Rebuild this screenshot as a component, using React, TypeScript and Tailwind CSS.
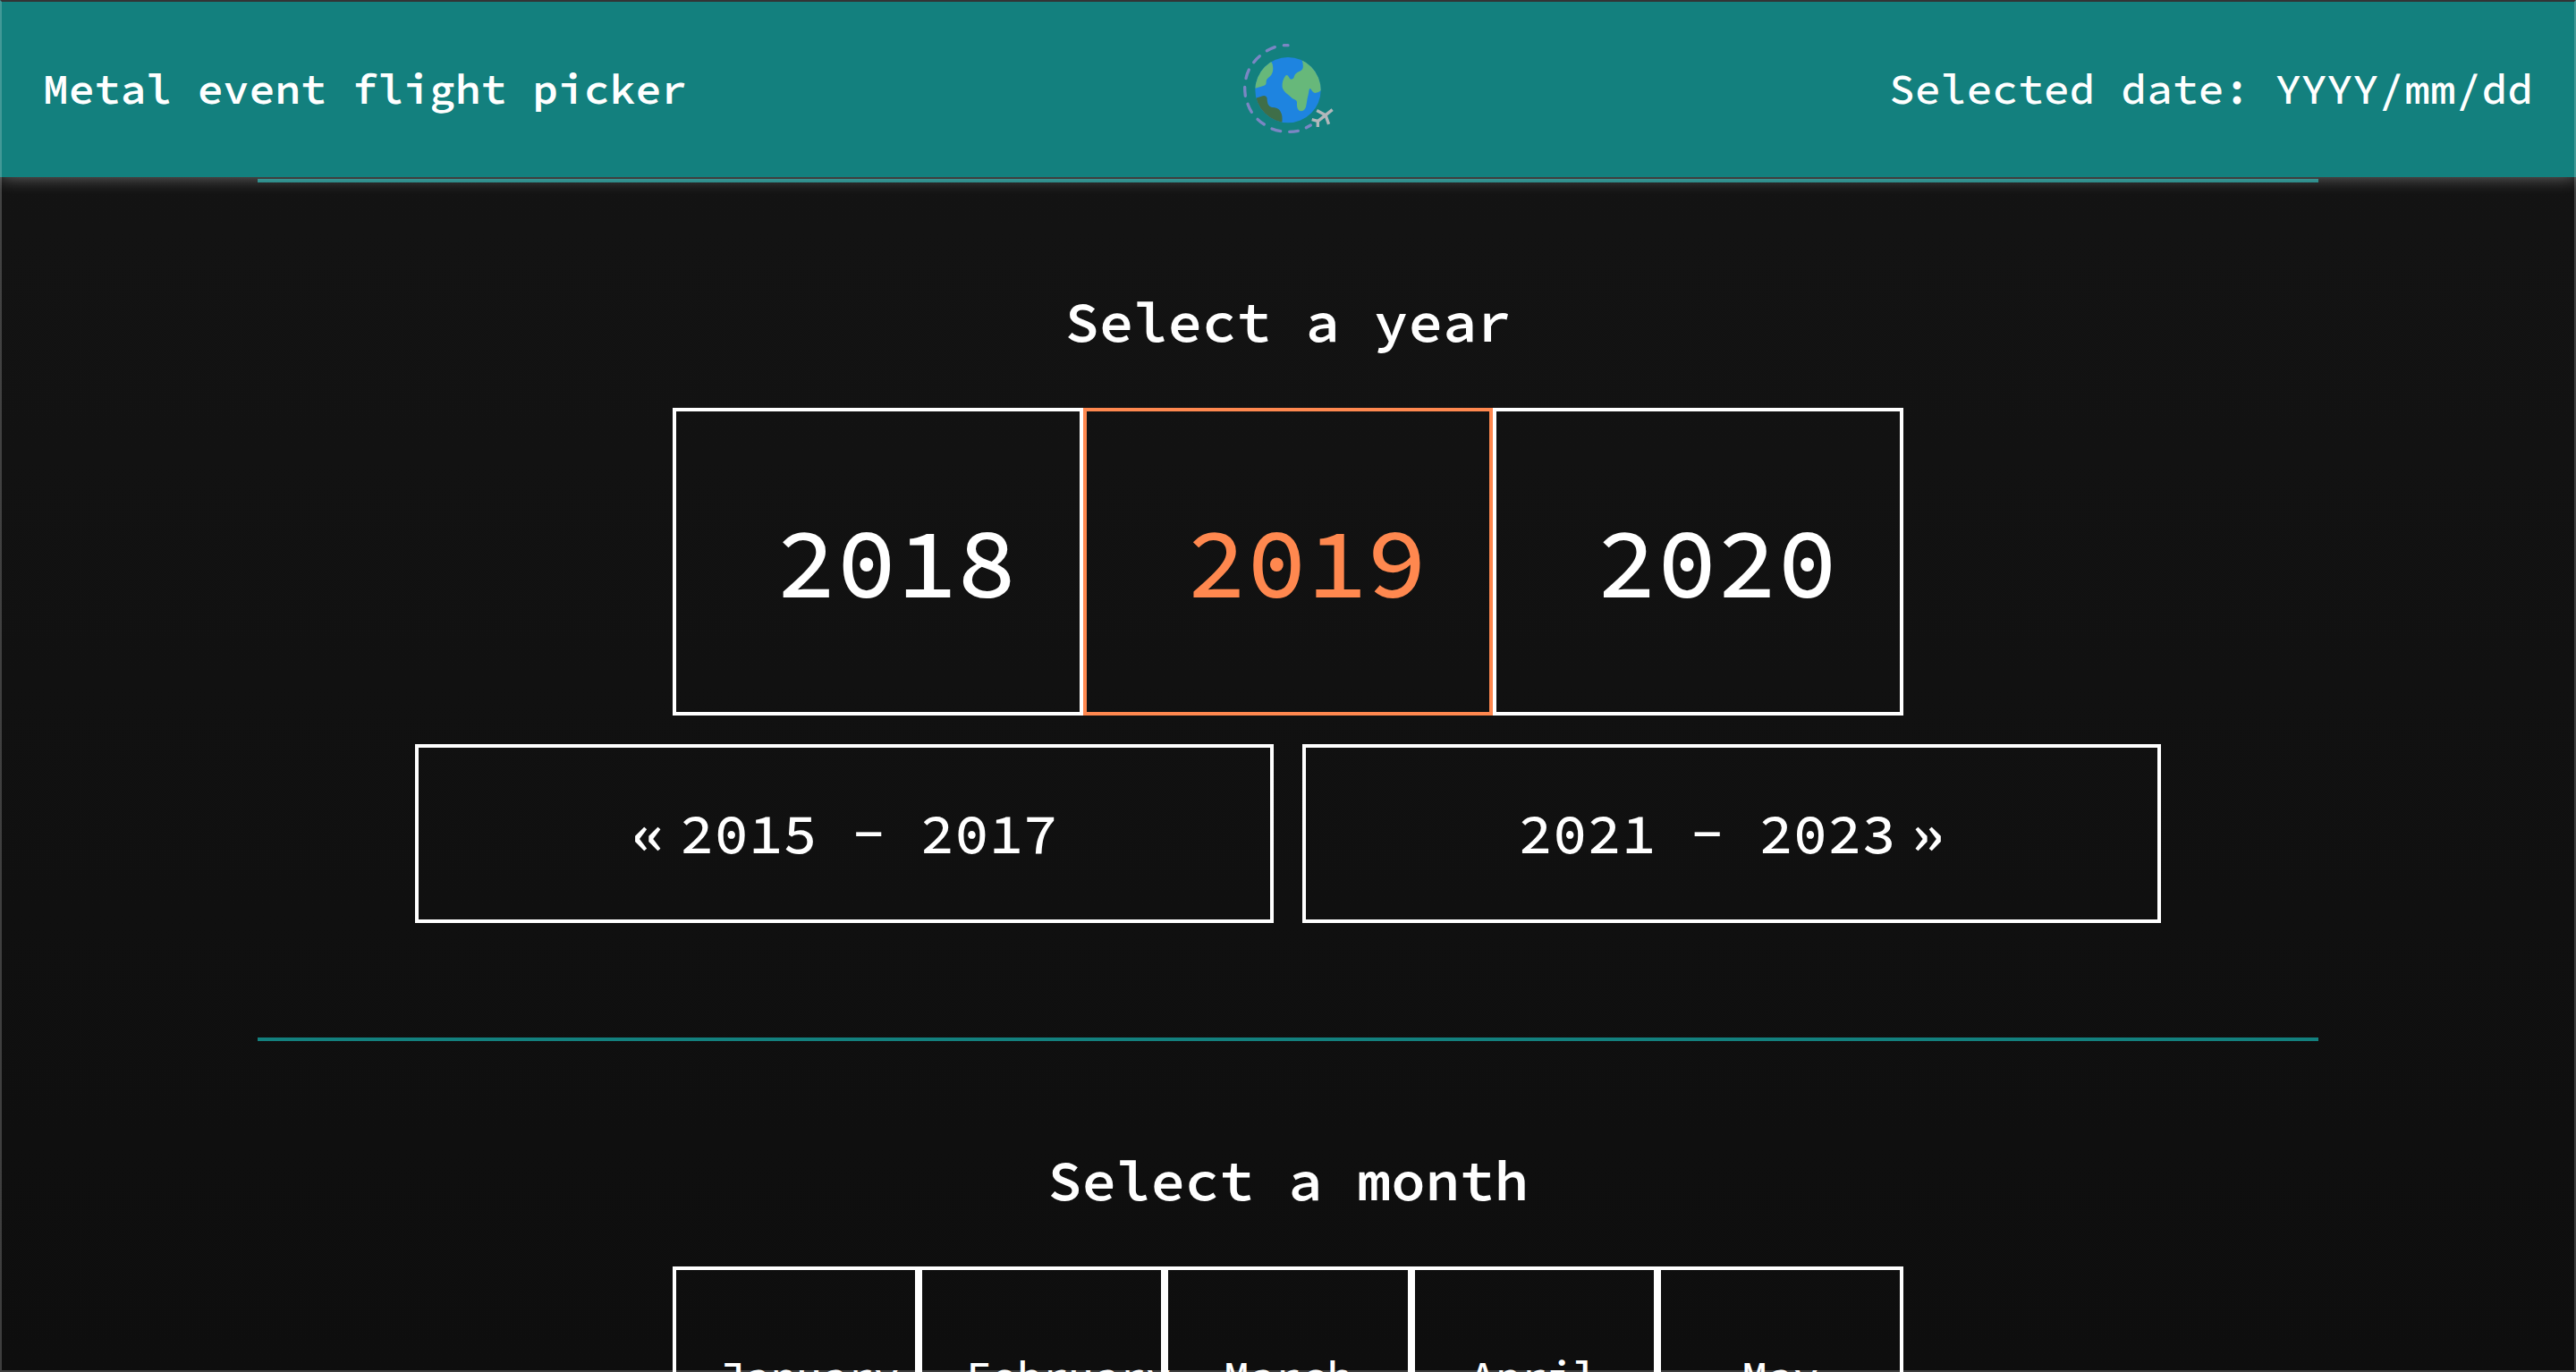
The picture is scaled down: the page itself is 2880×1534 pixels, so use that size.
import { useState } from 'react';

const years = ['2018', '2019', '2020'];
const months = ['January', 'February', 'March', 'April', 'May'];

function GlobeLogo() {
  return (
    <svg viewBox="0 0 420 420" className="size-[140px]" role="img" aria-label="Globe with a plane">
      <defs>
        <clipPath id="globe">
          <circle cx="210" cy="215" r="110" />
        </clipPath>
      </defs>
      <circle cx="210" cy="215" r="110" fill="#1e84e0" />
      <g clipPath="url(#globe)">
        <path
          d="M90 212 L100 209 L130 200 Q138 197 137 189 Q136 180 143 175 Q160 164 160 142 Q160 128 155 122 L140 100 L80 120 Z"
          fill="#67b87a"
        />
        <path
          d="M256 112 Q262 128 260 140 Q258 149 247 153 Q234 158 231 169 Q229 179 221 179 Q215 178 211 169 Q206 162 201 168 Q189 184 191 206 Q195 220 212 232 Q224 245 236 249 Q241 251 240 260 Q239 285 254 286 Q269 286 272 262 Q274 246 279 226 Q281 207 286 211 Q292 223 301 225 Q313 225 322 215 L340 150 L280 90 Z"
          fill="#67b87a"
        />
        <path
          d="M100 243 L125 235 Q137 232 140 242 Q139 262 149 270 Q155 274 165 274 Q182 276 188 294 Q192 305 190 323 L140 340 L80 280 Z"
          fill="#3f6e48"
        />
      </g>
      <g fill="none" stroke="#7b86c4" strokeWidth="10" strokeLinecap="round">
        <path d="M210 65 L196 65" />
        <path d="M166 71 Q152 76 139 83" />
        <path d="M115 101 Q103 111 95 122" />
        <path d="M79 147 Q72 161 69 176" />
        <path d="M65 205 Q65 220 67 235" />
        <path d="M75 262 Q80 277 88 289" />
        <path d="M108 313 Q118 323 130 330" />
        <path d="M156 345 Q170 351 185 353" />
        <path d="M215 355 Q230 355 244 352" />
        <path d="M271 341 L286 333" />
      </g>
      <g fill="none" stroke="#b2b7bb" strokeWidth="10" strokeLinecap="square" strokeLinejoin="round">
        <path d="M355 284 L311 319" />
        <path d="M311 286 L336 299 L345 325" />
        <path d="M295 315 L310 319 L310 334" />
      </g>
    </svg>
  );
}

function Divider() {
  return <hr className="mx-auto h-1 w-4/5 border-0 bg-[#13807e]" />;
}

export default function App() {
  const [year, setYear] = useState('2019');
  const [month, setMonth] = useState('');

  return (
    <div className="h-screen overflow-hidden bg-linear-to-b from-[#141414] to-[#0e0e0e] font-['Source_Code_Pro','Noto_Sans_Mono_CJK_JP','Liberation_Mono',monospace] font-medium text-white">
      <header className="relative z-10 grid h-[198px] grid-cols-[1fr_auto_1fr] items-center bg-[#13807e] px-12 text-5xl leading-none shadow-[0_0_18px_rgba(255,255,255,0.4)]">
        <h1 className="font-semibold">Metal event flight picker</h1>
        <GlobeLogo />
        <p className="text-right">Selected date: YYYY/mm/dd</p>
      </header>

      <main className="pt-0.5">
        <section className="pb-32">
          <Divider />
          <h2 className="mt-[123px] mb-[65px] text-center text-[64px] leading-16 font-semibold">Select a year</h2>
          <div className="mx-auto grid w-[1376px] max-w-full grid-cols-3">
            {years.map((y) => (
              <button
                key={y}
                type="button"
                aria-pressed={y === year}
                onClick={() => setYear(y)}
                className={
                  y === year
                    ? 'min-w-0 border-4 border-[#ff884f] px-28 pt-[113px] pb-[111px] text-[112px] leading-28 text-[#ff884f]'
                    : 'min-w-0 border-4 border-white px-28 pt-[113px] pb-[111px] text-[112px] leading-28'
                }
              >
                {y}
              </button>
            ))}
          </div>
          <div className="mt-8 flex justify-center gap-8">
            <button type="button" className="flex w-1/3 items-center justify-center gap-4 border-4 border-white pt-[63px] pb-[65px] text-[64px] leading-16">
              <span>«</span>
              <span>2015 - 2017</span>
            </button>
            <button type="button" className="flex w-1/3 items-center justify-center gap-4 border-4 border-white pt-[63px] pb-[65px] text-[64px] leading-16">
              <span>2021 - 2023</span>
              <span>»</span>
            </button>
          </div>
        </section>

        <section>
          <Divider />
          <h2 className="mt-[123px] mb-[65px] text-center text-[64px] leading-16 font-semibold">Select a month</h2>
          <div className="mx-auto grid w-[1376px] max-w-full grid-cols-5">
            {months.map((m) => (
              <button
                key={m}
                type="button"
                aria-pressed={m === month}
                onClick={() => setMonth(m)}
                className="min-w-0 border-4 border-white px-12 pt-[94px] pb-24 text-5xl leading-12"
              >
                {m}
              </button>
            ))}
          </div>
        </section>
      </main>

      <div className="pointer-events-none fixed inset-0 z-20 border-2 border-x-white/20 border-t-[#333435] border-b-white/20" />
    </div>
  );
}
